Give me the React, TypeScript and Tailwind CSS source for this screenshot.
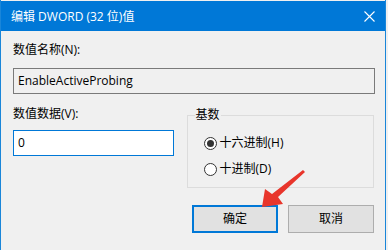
import React from "react";

export default function App() {
  const font = "font-['Segoe_UI','Open_Sans','Noto_Sans_CJK_SC',sans-serif]";
  return (
    <div className={`relative w-[388px] h-[250px] bg-[#f0f0f0] overflow-hidden text-[12px] text-black ${font}`}>
      <div className="w-[386px] h-[250px] pt-[1px] bg-[#f0f0f0] border-l border-r border-[#1a86d9] flex flex-col">
        {/* Title bar */}
        <div className="h-[30px] bg-[#0078d7] flex items-center justify-between pl-[10px] pr-[10px] text-white">
          <span className="leading-[16px] mt-[1px]">编辑 DWORD (32 位)值</span>
          <svg width="11" height="11" viewBox="0 0 11 11">
            <path d="M0.5 0.5 L10.5 10.5 M10.5 0.5 L0.5 10.5" stroke="white" strokeWidth="1.1" fill="none" />
          </svg>
        </div>
        {/* Body */}
        <div className="flex flex-col pl-[12px] pr-[11px]">
          <div className="mt-[11px] h-[16px] leading-[16px]">数值名称(N):</div>
          <div className="mt-[10px] h-[26px] w-[362px] border border-[#7a7a7a] bg-[#f0f0f0] flex items-center pl-[4px] leading-[16px]">
            EnableActiveProbing
          </div>
          <div className="flex">
            <div className="flex flex-col w-[161px]">
              <div className="mt-[12px] h-[16px] leading-[16px]">数值数据(V):</div>
              <div className="mt-[8px] h-[26px] border border-[#0078d7] bg-white flex items-center pl-[4px] leading-[16px]">
                0
              </div>
            </div>
            <fieldset className="mt-[13px] ml-[13px] w-[188px] h-[81px] border border-[#dcdcdc]">
              <legend className="ml-[7px] px-[1px] leading-[16px]">基数</legend>
              <div className="flex flex-col pl-[16px]">
                <div className="mt-[13px] flex items-center h-[14px]">
                  <span className="w-[13px] h-[13px] rounded-full border border-[#333] bg-white flex items-center justify-center">
                    <span className="w-[7px] h-[7px] rounded-full bg-[#333]" />
                  </span>
                  <span className="ml-[3px] leading-[16px]">十六进制(H)</span>
                </div>
                <div className="mt-[12px] flex items-center h-[14px]">
                  <span className="w-[13px] h-[13px] rounded-full border border-[#333] bg-white" />
                  <span className="ml-[3px] leading-[16px]">十进制(D)</span>
                </div>
              </div>
            </fieldset>
          </div>
          <div className="mt-[17px] flex justify-end gap-[10px]">
            <div className="w-[86px] h-[28px] border-2 border-[#0078d7] bg-[#e1e1e1] flex items-center justify-center leading-[16px]">
              确定
            </div>
            <div className="w-[86px] h-[28px] border border-[#adadad] bg-[#e1e1e1] flex items-center justify-center leading-[16px]">
              取消
            </div>
          </div>
        </div>
      </div>
      {/* Red annotation arrow */}
      <svg className="absolute left-0 top-0 pointer-events-none" width="388" height="250" viewBox="0 0 388 250">
        <polygon
          points="305,172 278,197 283,204 262,207 265,189 272,194 303,170"
          fill="#e8352b"
        />
      </svg>
    </div>
  );
}
